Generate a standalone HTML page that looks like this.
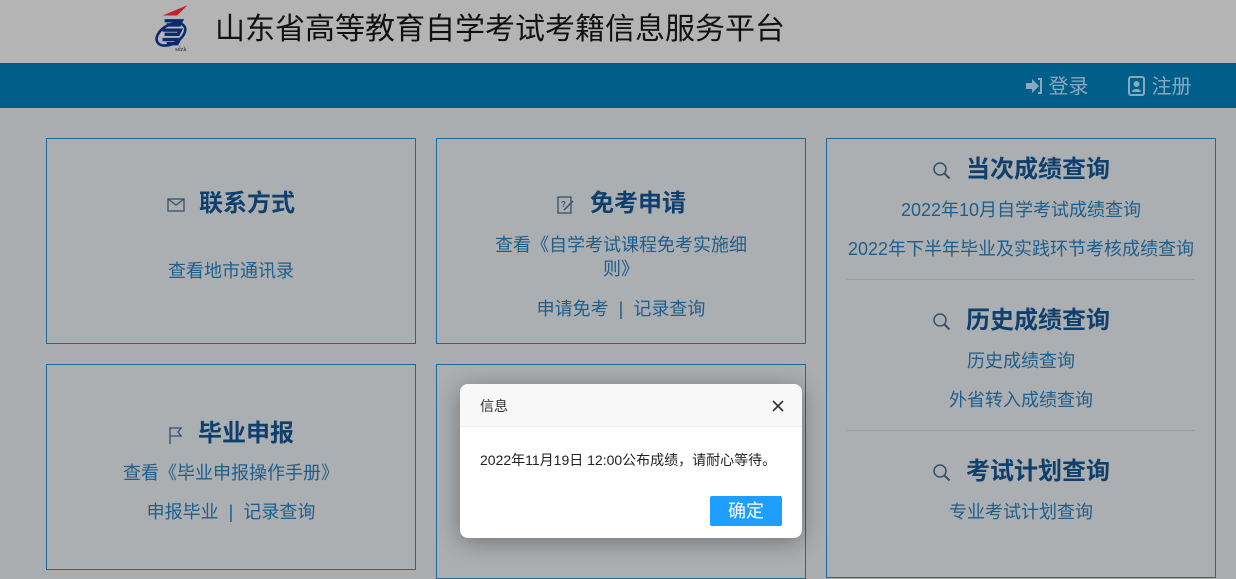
<!DOCTYPE html>
<html><head><meta charset="utf-8">
<style>
*{margin:0;padding:0;box-sizing:border-box}
body{width:1236px;height:574px;overflow:hidden;background:#abaeb1;font-family:"Liberation Sans","Noto Sans CJK SC",sans-serif;position:relative}
.hdr{position:absolute;left:0;top:0;width:1236px;height:63px;background:#b4b4b4}
.nav{position:absolute;left:0;top:63px;width:1236px;height:45px;background:#005f8a}
.card{position:absolute;border:1px solid #1b6b9c;background:#acafb2}
.t{position:absolute;left:0;right:0;text-align:center;font-size:24px;font-weight:bold;color:#0f3f6c}
.l{position:absolute;left:0;right:0;text-align:center;font-size:18px;color:#1d5e8c}
.ic{display:inline-block;vertical-align:middle;margin-right:14px}
.sep{position:absolute;left:20px;right:20px;height:1px;background:#9a9da0}
</style></head><body>
<div class="hdr">
 <svg style="position:absolute;left:152px;top:3px" width="42" height="48" viewBox="0 0 40 46">
  <path d="M10 12 L34 2 L24 12 Z" fill="#c0232a"/>
  <ellipse cx="18" cy="30" rx="15" ry="9" fill="none" stroke="#0d2a6e" stroke-width="2.5" transform="rotate(-30 18 30)"/>
  <path d="M12 17 H28 L26 21 H14 M10 26 H27 L25 30 H12 M10 35 H26 L24 39 H14" fill="none" stroke="#0d2a6e" stroke-width="3.2"/>
  <text x="22" y="46" font-size="6" fill="#222" font-family="Liberation Serif">sdzk</text>
 </svg>
 <div style="position:absolute;left:215px;top:12px;font-size:30px;line-height:36px;color:#111">山东省高等教育自学考试考籍信息服务平台</div>
</div>
<div class="nav">
 <div style="position:absolute;left:1025px;top:7px;font-size:20px;color:#8aa9bd">
  <svg width="18" height="18" viewBox="0 0 18 18" style="vertical-align:-2px"><path d="M1 6h6V2l7 7-7 7v-4H1z" fill="#8aa9bd"/><path d="M13 2h3v14h-3" fill="none" stroke="#8aa9bd" stroke-width="2"/></svg> 登录
 </div>
 <div style="position:absolute;left:1128px;top:7px;font-size:20px;color:#8aa9bd">
  <svg width="18" height="20" viewBox="0 0 18 20" style="vertical-align:-3px"><rect x="1" y="1" width="15" height="18" rx="2" fill="none" stroke="#8aa9bd" stroke-width="2"/><circle cx="8.5" cy="8" r="3" fill="#8aa9bd"/><path d="M4 16c0-4 9-4 9 0z" fill="#8aa9bd"/></svg> 注册
 </div>
</div>

<div class="card" style="left:46px;top:138px;width:370px;height:206px">
 <div class="t" style="top:44px"><svg class="ic" width="18" height="14" viewBox="0 0 18 14"><rect x="1" y="1" width="16" height="12" fill="none" stroke="#35506a" stroke-width="1.3"/><path d="M1 1l8 6 8-6" fill="none" stroke="#35506a" stroke-width="1.3"/></svg>联系方式</div>
 <div class="l" style="top:118px">查看地市通讯录</div>
</div>
<div class="card" style="left:436px;top:138px;width:370px;height:206px">
 <div class="t" style="top:44px"><svg class="ic" width="20" height="20" viewBox="0 0 20 20"><rect x="2" y="2" width="13" height="16" fill="none" stroke="#35506a" stroke-width="1.3"/><path d="M8 15l9-9" stroke="#35506a" stroke-width="1.5"/><text x="5" y="12" font-size="8" fill="#35506a">?</text></svg>免考申请</div>
 <div class="l" style="top:94px;left:55px;right:55px;line-height:24px">查看《自学考试课程免考实施细则》</div>
 <div class="l" style="top:156px">申请免考 &nbsp;|&nbsp; 记录查询</div>
</div>
<div class="card" style="left:826px;top:138px;width:390px;height:440px">
 <div class="t" style="top:10px"><svg class="ic" width="20" height="20" viewBox="0 0 20 20"><circle cx="8" cy="8" r="6" fill="none" stroke="#35506a" stroke-width="1.5"/><path d="M12.5 12.5l5 5" stroke="#35506a" stroke-width="2"/></svg>当次成绩查询</div>
 <div class="l" style="top:57px">2022年10月自学考试成绩查询</div>
 <div class="l" style="top:96px">2022年下半年毕业及实践环节考核成绩查询</div>
 <div class="sep" style="top:140px"></div>
 <div class="t" style="top:161px"><svg class="ic" width="20" height="20" viewBox="0 0 20 20"><circle cx="8" cy="8" r="6" fill="none" stroke="#35506a" stroke-width="1.5"/><path d="M12.5 12.5l5 5" stroke="#35506a" stroke-width="2"/></svg>历史成绩查询</div>
 <div class="l" style="top:208px">历史成绩查询</div>
 <div class="l" style="top:247px">外省转入成绩查询</div>
 <div class="sep" style="top:291px"></div>
 <div class="t" style="top:312px"><svg class="ic" width="20" height="20" viewBox="0 0 20 20"><circle cx="8" cy="8" r="6" fill="none" stroke="#35506a" stroke-width="1.5"/><path d="M12.5 12.5l5 5" stroke="#35506a" stroke-width="2"/></svg>考试计划查询</div>
 <div class="l" style="top:359px">专业考试计划查询</div>
</div>
<div class="card" style="left:46px;top:364px;width:370px;height:206px">
 <div class="t" style="top:48px"><svg class="ic" width="16" height="18" viewBox="0 0 16 18"><path d="M2 1v17M2 2h11l-3 4 3 4H2" fill="none" stroke="#35506a" stroke-width="1.3"/></svg>毕业申报</div>
 <div class="l" style="top:94px">查看《毕业申报操作手册》</div>
 <div class="l" style="top:133px">申报毕业 &nbsp;|&nbsp; 记录查询</div>
</div>
<div class="card" style="left:436px;top:364px;width:370px;height:215px"></div>

<div style="position:absolute;left:460px;top:384px;width:342px;height:154px;background:#fff;border-radius:8px;box-shadow:0 4px 24px rgba(0,0,0,0.35);overflow:hidden">
 <div style="height:43px;background:#f8f8f8;border-bottom:1px solid #eee;font-size:14px;color:#333;padding:12px 20px">信息</div>
 <svg style="position:absolute;left:311px;top:15px" width="14" height="14" viewBox="0 0 14 14"><path d="M2 2l10 10M12 2L2 12" stroke="#333" stroke-width="1.6"/></svg>
 <div style="position:absolute;left:20px;top:66px;font-size:14px;color:#222">2022年11月19日 12:00公布成绩，请耐心等待。</div>
 <div style="position:absolute;left:250px;top:112px;width:72px;height:30px;background:#1e9fff;color:#fff;font-size:18px;text-align:center;line-height:30px;border-radius:2px">确定</div>
</div>
</body></html>
